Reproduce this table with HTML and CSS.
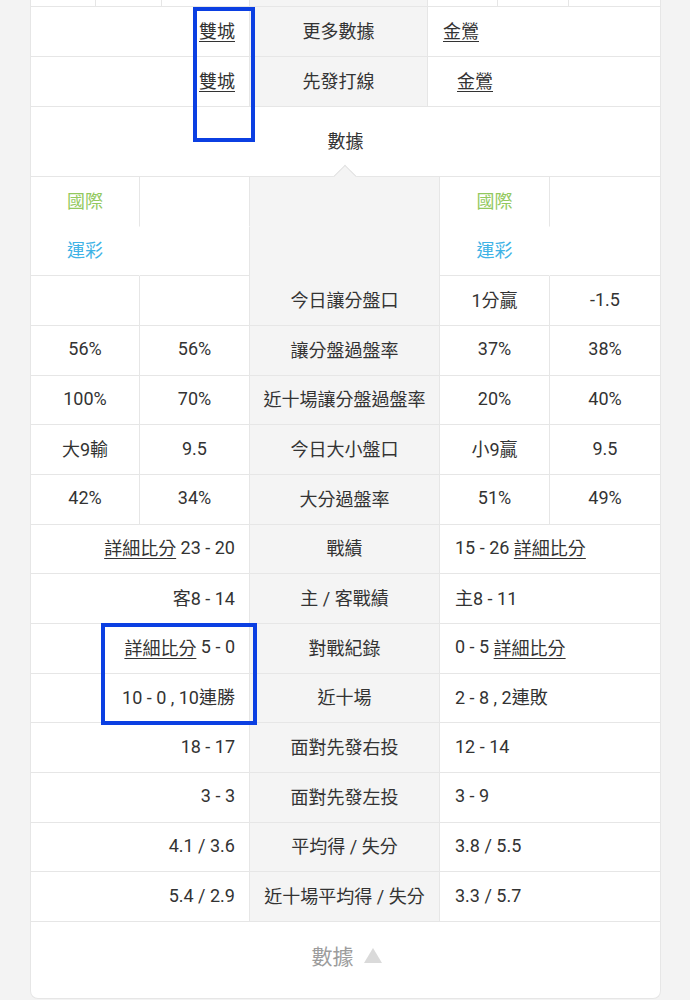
FILE: index.html
```html
<!DOCTYPE html>
<html lang="zh-Hant">
<head>
<meta charset="utf-8">
<title>數據</title>
<link rel="stylesheet" href="styles.css">
</head>
<body>
<div class="card">
  <div class="top-row">
    <span class="c"></span><span class="c"></span><span class="c"></span><span class="c mid"></span><span class="c"></span><span class="c"></span><span class="c last"></span>
  </div>

  <div class="sec upper">
    <div class="c al-r"><a class="lnk">雙城</a></div>
    <div class="c mid">更多數據</div>
    <div class="c al-l last"><a class="lnk">金鶯</a></div>
    <div class="c al-r"><a class="lnk">雙城</a></div>
    <div class="c mid">先發打線</div>
    <div class="c al-l indent last"><a class="lnk">金鶯</a></div>
  </div>

  <div class="tab-head">數據</div>

  <div class="sec odds">
    <div class="c nb green">國際</div>
    <div class="c nb"></div>
    <div class="c mid span3"><span class="mid-label">今日讓分盤口</span></div>
    <div class="c nb green">國際</div>
    <div class="c nb last"></div>

    <div class="c nr blue">運彩</div>
    <div class="c"></div>
    <div class="c nr blue">運彩</div>
    <div class="c last"></div>

    <div class="c"></div>
    <div class="c"></div>
    <div class="c">1分贏</div>
    <div class="c last">-1.5</div>

    <div class="c">56%</div>
    <div class="c">56%</div>
    <div class="c mid">讓分盤過盤率</div>
    <div class="c">37%</div>
    <div class="c last">38%</div>

    <div class="c">100%</div>
    <div class="c">70%</div>
    <div class="c mid">近十場讓分盤過盤率</div>
    <div class="c">20%</div>
    <div class="c last">40%</div>

    <div class="c">大9輸</div>
    <div class="c">9.5</div>
    <div class="c mid">今日大小盤口</div>
    <div class="c">小9贏</div>
    <div class="c last">9.5</div>

    <div class="c">42%</div>
    <div class="c">34%</div>
    <div class="c mid">大分過盤率</div>
    <div class="c">51%</div>
    <div class="c last">49%</div>
  </div>

  <div class="sec record">
    <div class="c al-r"><a class="lnk">詳細比分</a>&nbsp;23 - 20</div>
    <div class="c mid">戰績</div>
    <div class="c al-l last">15 - 26&nbsp;<a class="lnk">詳細比分</a></div>

    <div class="c al-r">客8 - 14</div>
    <div class="c mid">主 / 客戰績</div>
    <div class="c al-l last">主8 - 11</div>

    <div class="c al-r"><a class="lnk">詳細比分</a>&nbsp;5 - 0</div>
    <div class="c mid">對戰紀錄</div>
    <div class="c al-l last">0 - 5&nbsp;<a class="lnk">詳細比分</a></div>

    <div class="c al-r">10 - 0 , 10連勝</div>
    <div class="c mid">近十場</div>
    <div class="c al-l last">2 - 8 , 2連敗</div>

    <div class="c al-r">18 - 17</div>
    <div class="c mid">面對先發右投</div>
    <div class="c al-l last">12 - 14</div>

    <div class="c al-r">3 - 3</div>
    <div class="c mid">面對先發左投</div>
    <div class="c al-l last">3 - 9</div>

    <div class="c al-r">4.1 / 3.6</div>
    <div class="c mid">平均得 / 失分</div>
    <div class="c al-l last">3.8 / 5.5</div>

    <div class="c al-r">5.4 / 2.9</div>
    <div class="c mid">近十場平均得 / 失分</div>
    <div class="c al-l last">3.3 / 5.7</div>
  </div>

  <div class="foot">
    <span class="foot-label">數據</span>
    <svg class="foot-tri" width="18" height="15" viewBox="0 0 18 15"><polygon points="9,0 18,15 0,15" fill="#dadada"/></svg>
  </div>
</div>

<div class="mark mark-a"></div>
<div class="mark mark-b"></div>
</body>
</html>
```

FILE: styles.css
```css
* { box-sizing: border-box; }

html, body {
  margin: 0;
  padding: 0;
}

body {
  background: #f3f3f3;
  font-family: Roboto, "Noto Sans CJK TC", sans-serif;
  font-size: 18px;
  color: #333;
  width: 690px;
  height: 1000px;
  overflow: hidden;
  position: relative;
}

.card {
  margin-left: 30px;
  width: 631px;
  background: #fff;
  border-left: 1px solid #e6e6e6;
  border-right: 1px solid #e6e6e6;
  border-bottom: 1px solid #e6e6e6;
  border-radius: 0 0 8px 8px;
}

.c {
  display: flex;
  align-items: center;
  justify-content: center;
  border-right: 1px solid #e6e6e6;
  border-bottom: 1px solid #e6e6e6;
  white-space: nowrap;
  min-width: 0;
  padding-bottom: 3px;
}

.c.last { border-right: none; }
.c.nb { border-bottom-color: transparent; }
.c.nr { border-right-color: transparent; }

.mid { background: #f4f4f4; }

.al-r { justify-content: flex-end; padding-right: 14px; }
.al-l { justify-content: flex-start; padding-left: 15px; }
.al-l.indent { padding-left: 29px; }

.lnk {
  color: #333;
  text-decoration: underline;
  text-underline-offset: 3px;
  text-decoration-thickness: 1px;
}

.top-row {
  display: grid;
  grid-template-columns: 65px 66px 88px 178px 70px 71px 1fr;
  height: 7px;
}

.top-row .c { padding: 0; }

.sec { display: grid; }

.upper {
  grid-template-columns: 219px 178px 1fr;
  grid-auto-rows: 50px;
}

.tab-head {
  position: relative;
  height: 70px;
  display: flex;
  align-items: center;
  justify-content: center;
  border-bottom: 1px solid #e6e6e6;
  padding-bottom: 3px;
}

.tab-head::after {
  content: "";
  position: absolute;
  left: 50%;
  bottom: -8px;
  width: 15px;
  height: 15px;
  margin-left: -9px;
  background: #f4f4f4;
  border-top: 1px solid #e2e2e2;
  border-left: 1px solid #e2e2e2;
  transform: rotate(45deg);
}

.odds {
  grid-template-columns: 109px 110px 190px 110px 1fr;
  grid-auto-rows: 49.67px;
}

.span3 {
  grid-row: span 3;
  align-items: flex-end;
  padding-bottom: 0;
}

.mid-label {
  height: 48.67px;
  padding-bottom: 3px;
  display: flex;
  align-items: center;
}

.green { color: #93c95e; }
.blue { color: #3fb3e6; }

.record {
  grid-template-columns: 219px 190px 1fr;
  grid-auto-rows: 49.67px;
}

.foot {
  height: 76px;
  display: flex;
  align-items: center;
  justify-content: center;
  gap: 10px;
  padding-left: 2px;
  padding-bottom: 10px;
}

.foot-label {
  font-size: 21px;
  color: #9c9c9c;
}

.foot-tri { display: block; margin-top: 1px; }

.mark {
  position: absolute;
  border: 4px solid #0b3fe2;
}

.mark-a {
  left: 193px;
  top: 7px;
  width: 62px;
  height: 135px;
}

.mark-b {
  left: 101px;
  top: 623px;
  width: 156px;
  height: 102px;
}
```
